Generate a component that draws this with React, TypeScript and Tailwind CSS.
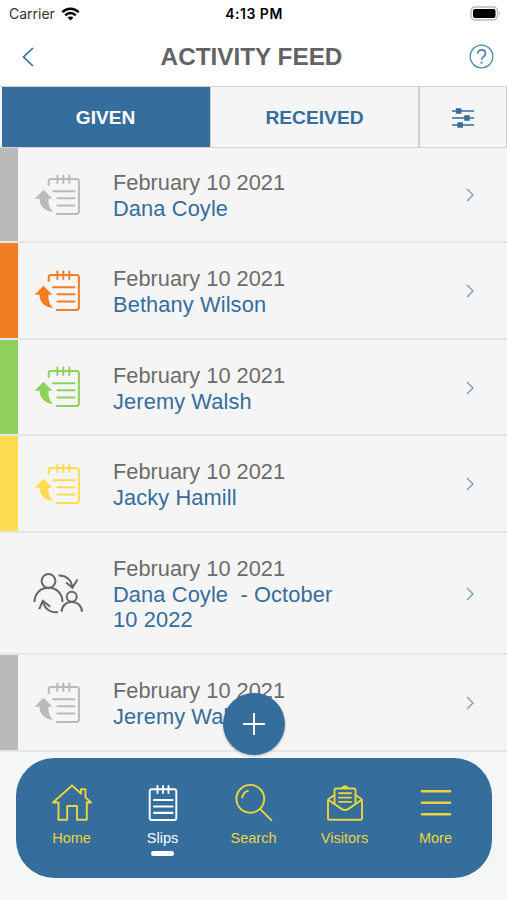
import type { ReactNode } from "react";
import clsx from "clsx";

type Slip = {
  date: string;
  name: string;
  kind: "slip" | "meeting";
  bar: string;
  icon: string;
  height: string;
};

const slips: Slip[] = [
  { date: "February 10 2021", name: "Dana Coyle", kind: "slip", bar: "bg-[#bababa]", icon: "text-[#bababa]", height: "h-[95px]" },
  { date: "February 10 2021", name: "Bethany Wilson", kind: "slip", bar: "bg-[#f27d24]", icon: "text-[#f27d24]", height: "h-[97px]" },
  { date: "February 10 2021", name: "Jeremy Walsh", kind: "slip", bar: "bg-[#90d05c]", icon: "text-[#90d05c]", height: "h-[96px]" },
  { date: "February 10 2021", name: "Jacky Hamill", kind: "slip", bar: "bg-[#fddc50]", icon: "text-[#fddc50]", height: "h-[97px]" },
  { date: "February 10 2021", name: "Dana Coyle \u00a0- October 10 2022", kind: "meeting", bar: "bg-transparent", icon: "text-[#666767]", height: "h-[122px]" },
  { date: "February 10 2021", name: "Jeremy Walsh", kind: "slip", bar: "bg-[#bababa]", icon: "text-[#bababa]", height: "h-[97px]" },
];

function SlipIcon() {
  return (
    <svg width="50" height="46" viewBox="33 172 50 46" fill="none" stroke="currentColor" strokeWidth="2" strokeLinecap="round">
      <path d="M48.700 185v-3.600q0-2.400 2.400-2.400h25.400q2.400 0 2.400 2.400v30.200q0 2.400-2.400 2.400H56.800" />
      <path d="M57.400 175.400v7.600M63.300 175.400v7.600M69.300 175.400v7.600" />
      <path d="M53 191.200h21.500M57.500 198.300h17M57.500 205.400h17" />
      <path d="M43.500 189.700 34.600 198.700h4.900c.2 7.200 4.500 12.300 13.500 13.300-3.500-3.300-4.800-7.700-4.600-13.300h4z" fill="currentColor" stroke="none" />
    </svg>
  );
}

function MeetingIcon() {
  return (
    <svg width="50" height="46" viewBox="33 570 50 46" fill="none" stroke="currentColor" strokeWidth="2">
      <circle cx="48.500" cy="581" r="6.900" />
      <path d="M34.500 602c0-8.500 6-14.200 14-14.200s14 5.700 14 14.200" />
      <circle cx="71.700" cy="596.800" r="5" />
      <path d="M61.600 611.800c0-6 4.300-9.800 10.100-9.800s10.300 3.800 10.300 9.800" />
      <path d="M58.500 575.600c7.500-.4 13 4 14 12M66 582.400l6.500 5.400 5-8.300" />
      <path d="M58 612c-7.500 1.200-13.500-3-15-10.800M39.200 609.200l3.600-8.400 7.300 5.800" />
    </svg>
  );
}

function Chevron() {
  return (
    <svg width="10" height="14" viewBox="0 0 10 14" fill="none" stroke="#7a9dc2" strokeWidth="1.400">
      <path d="m2 1 6 6-6 6" />
    </svg>
  );
}

function StatusBar() {
  return (
    <div className="grid h-[27px] grid-cols-3 items-center pr-[6px] pl-[9px] font-['Inter',sans-serif] text-[14px] text-black">
      <div className="flex items-center gap-[6px]">
        <span className="text-[#333]">Carrier</span>
        <svg width="19" height="14" viewBox="0 0 19 14" fill="none" stroke="#000" strokeWidth="2.500">
          <path d="M1.300 5.200c4.700-4.700 11.700-4.700 16.400 0M4.300 8.300c3-3 7.400-3 10.400 0" />
          <path d="M9.500 13.500 6.600 10.600c1.600-1.500 4.200-1.500 5.800 0z" fill="#000" stroke="none" />
        </svg>
      </div>
      <span className="mr-[2px] text-center text-[14px] font-semibold tracking-[0.5px] whitespace-nowrap">4:13 PM</span>
      <svg className="justify-self-end" width="31" height="15" viewBox="0 0 31 15">
        <rect x="1" y="1" width="26.500" height="13" rx="4" fill="#fff" stroke="#b9b9b9" strokeWidth="1.400" />
        <rect x="3" y="3" width="22.500" height="9" rx="2" fill="#000" />
        <path d="M29 5.500q2 2 0 4z" fill="#aaa" />
      </svg>
    </div>
  );
}

function Header() {
  return (
    <header className="flex h-[59px] items-center justify-between pr-[13px] pl-[21px]">
      <svg width="14" height="20" viewBox="0 0 14 20" fill="none" stroke="#356d9c" strokeWidth="1.700">
        <path d="M12 1 2.500 10l9.500 9" />
      </svg>
      <h1 className="mr-px pt-px text-[24.300px] font-bold text-[#626364]">ACTIVITY FEED</h1>
      <svg width="25" height="25" viewBox="0 0 25 25" fill="none" stroke="#4d82b4" strokeWidth="1.300">
        <circle cx="12.500" cy="12.500" r="11.300" />
        <path d="M8.700 9.700c0-2.400 1.600-3.900 3.900-3.900s3.900 1.400 3.900 3.600c0 3.300-3.900 3.200-3.900 6.400" strokeWidth="1.700" />
        <path d="M12.600 17.700v1.900" strokeWidth="1.900" />
      </svg>
    </header>
  );
}

function Tabs() {
  return (
    <div className="flex h-[62px] border-y border-[#d3d3d3] pl-[2px] text-[19.200px] font-bold">
      <button className="w-[208px] bg-[#356d9c] pt-[3px] pr-px text-[19.100px] text-white">GIVEN</button>
      <button className="w-[210px] border-r-2 border-l border-[#cfcfcf] pt-[3px] text-[#356d9c]">RECEIVED</button>
      <button className="flex flex-1 items-center justify-center border-r border-[#cfcfcf] pt-[2px]">
        <svg width="22" height="20" viewBox="0 0 22 20" fill="none" stroke="#356d9c" strokeWidth="1.700">
          <path d="M0 3h22M0 10h22M0 17h22" />
          <path d="M3.800.2h5.600v5.600H3.800zM12.200 7.200h5.600v5.600h-5.600zM5.400 14.200H11v5.600H5.400z" fill="#356d9c" stroke="none" />
        </svg>
      </button>
    </div>
  );
}

function SlipRow({ slip }: { slip: Slip }) {
  return (
    <li className={clsx("flex border-b-2 border-[#e5e6e7]", slip.height)}>
      <div className={clsx("w-[18px] shrink-0", slip.bar)} />
      <div className="flex flex-1 items-center pr-[32px] pl-[15px]">
        <div className={slip.icon}>{slip.kind === "slip" ? <SlipIcon /> : <MeetingIcon />}</div>
        <div className="ml-[30px] w-[240px] pt-[3px] text-[21.800px] leading-[25.700px]">
          <p className="text-[#6b6c6c]">{slip.date}</p>
          <p className="tracking-[0.12px] text-[#356d9c]">{slip.name}</p>
        </div>
        <div className="ml-auto pt-px">
          <Chevron />
        </div>
      </div>
    </li>
  );
}

function NavItem({ label, active, children }: { label: string; active?: boolean; children: ReactNode }) {
  return (
    <button className={clsx("flex w-[91px] flex-col items-center", active ? "text-white" : "text-[#ecd43c]")}>
      <svg width="42" height="40" viewBox="0 0 42 40" fill="none" stroke="currentColor" strokeWidth="1.900" strokeLinecap="round" strokeLinejoin="round">
        {children}
      </svg>
      <span className="mt-[8px] text-[14.500px] leading-[17px]">{label}</span>
      {active && <span className="mt-[4px] h-[5px] w-[23px] rounded-full bg-white" />}
    </button>
  );
}

function BottomNav() {
  return (
    <nav className="mt-[6px] mr-[15px] ml-[16px] flex h-[120px] rounded-[38px] bg-[#356d9c] pt-[24px] pl-[10px]">
      <NavItem label="Home">
        <path d="M7.500 20.500v17.300h8.700V24h9.800v13.800h9.800V20.500M7.500 20.500H2L21 3.500l9 8V7.300h4.500v8.200l5.500 5h-4.500" />
      </NavItem>
      <NavItem label="Slips" active>
        <rect x="7.700" y="7.200" width="26.600" height="30.800" rx="2" />
        <path d="M15.500 4v7M21 4v7M26.500 4v7" />
        <path d="M12 18h18.500M12 24.500h18.500M12 30.800h18.500" strokeWidth="2.200" />
      </NavItem>
      <NavItem label="Search">
        <circle cx="17.300" cy="16.800" r="13.900" />
        <path d="m27 26.800 11.300 11.400M9.200 15.200c.7-3.200 2.800-5.400 5.700-6.300" />
      </NavItem>
      <NavItem label="Visitors">
        <path d="M10.500 13 5 16.700q-1 .8-1 2V36q0 1.700 1.700 1.700h30.600q1.700 0 1.700-1.700V18.700q0-1.200-1-2L31.500 13" />
        <path d="M4.300 17.800 17.500 26.900q3.500 2.300 7 0L37.700 17.800" />
        <path d="M10.500 21V8q0-1.500 1.500-1.500h18q1.500 0 1.500 1.500v13" />
        <path d="M18 6q3-3.600 6 0z" fill="currentColor" />
        <path d="M15 11.300h12M15 15.600h12M15 19.900h12" />
      </NavItem>
      <NavItem label="More">
        <path d="M7 9.300h28M7 20.800h28M7 32.300h28" strokeWidth="2.600" />
      </NavItem>
    </nav>
  );
}

export default function App() {
  return (
    <div className="relative h-[900px] w-[507px] overflow-hidden bg-[#f5f7f7] font-['Liberation_Sans',Arial,sans-serif]">
      <div className="bg-white">
        <StatusBar />
        <Header />
      </div>
      <div className="bg-[#f5f5f5]">
        <Tabs />
        <ul>
          {slips.map((slip, i) => (
            <SlipRow key={i} slip={slip} />
          ))}
        </ul>
      </div>
      <BottomNav />
      <button className="absolute top-[693px] left-[223px] flex size-[62px] items-center justify-center rounded-full bg-[#356d9c] shadow-[0_1px_3px_rgba(0,0,0,0.25)]">
        <svg width="22" height="22" viewBox="0 0 22 22" stroke="#fff" strokeWidth="2">
          <path d="M11 0v22M0 11h22" />
        </svg>
      </button>
    </div>
  );
}
